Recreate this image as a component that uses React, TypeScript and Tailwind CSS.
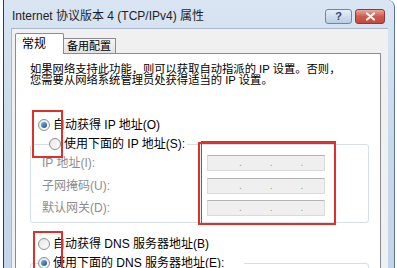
import React from "react";

const font = { fontFamily: '"Liberation Sans", "Noto Sans CJK SC", sans-serif' };

function Radio({ checked }: { checked?: boolean }) {
  return (
    <span className="relative flex size-[12px] shrink-0 items-center justify-center rounded-full border border-[#8e8f8f] bg-gradient-to-br from-[#e6e6e6] to-[#fdfdfd]">
      {checked ? (
        <span className="size-[6px] rounded-full bg-gradient-to-br from-[#7fb8e8] to-[#1c4f8c]" />
      ) : null}
    </span>
  );
}

function IpField() {
  return (
    <div className="flex h-[16px] w-[118px] items-center border border-[#dadada] border-t-[#b4b4b4] bg-[#efefef] text-[10px] leading-none text-[#9a9a9a]">
      <span className="w-[31px]" />
      <span>.</span>
      <span className="w-[28px]" />
      <span>.</span>
      <span className="w-[28px]" />
      <span>.</span>
    </div>
  );
}

export default function App() {
  const rows = ["IP 地址(I):", "子网掩码(U):", "默认网关(D):"];
  return (
    <div
      className="relative flex h-[268px] w-[397px] overflow-hidden bg-white text-[12px] text-black"
      style={font}
    >
      <div className="w-[4px] shrink-0 border-r border-[#3a3a3a] bg-white" />
      <div className="flex w-[391px] shrink-0 flex-col rounded-tr-[7px] border-r border-[#5d7391] bg-gradient-to-b from-[#d9e5f3] via-[#c9d9ec] to-[#c3d5ea]">
        <div className="flex h-[28px] shrink-0 items-center pl-[8px] pr-[9px] pt-[4px]">
          <span className="flex-1 whitespace-nowrap text-[12px] text-[#1e1e1e]">
            Internet 协议版本 4 (TCP/IPv4) 属性
          </span>
          <div className="flex gap-[3px]">
            <div className="flex h-[15px] w-[27px] items-center justify-center rounded-[3px] border border-[#6f87a6] bg-gradient-to-b from-[#e5eef8] to-[#b9cde4] text-[11px] font-bold leading-none text-[#30466a]">
              ?
            </div>
            <div className="flex h-[15px] w-[30px] items-center justify-center rounded-[3px] border border-[#8a3a3a] bg-gradient-to-b from-[#e9a99c] via-[#cf5a4c] to-[#c24a3e]">
              <svg width="11" height="9" viewBox="0 0 11 9">
                <path d="M2 1.5 L9 7.5 M9 1.5 L2 7.5" stroke="#fff" strokeWidth="2.2" strokeLinecap="round" />
              </svg>
            </div>
          </div>
        </div>
        <div className="ml-[7px] mr-[6px] flex flex-1 flex-col border-l border-t border-[#a9b8cb] bg-[#f0f0f0]">
          <div className="flex items-end pl-[3px] pt-[4px]">
            <div className="relative z-10 -mb-px flex h-[21px] w-[49px] items-center rounded-t-[2px] border border-b-0 border-[#898c95] bg-white pl-[6px]">
              常规
            </div>
            <div className="flex h-[15px] w-[52px] items-center whitespace-nowrap border border-b-0 border-l-0 border-[#898c95] bg-gradient-to-b from-[#f6f6f6] to-[#e2e2e2] pl-[3px] text-[11px]">
              备用配置
            </div>
          </div>
          <div className="ml-[3px] flex w-[366px] flex-1 flex-col border border-[#898c95] bg-white pl-[14px] pr-[11px] pt-[10px]">
            <div className="whitespace-nowrap text-[11.3px] leading-[11px]">
              <div>如果网络支持此功能，则可以获取自动指派的 IP 设置。否则，</div>
              <div>您需要从网络系统管理员处获得适当的 IP 设置。</div>
            </div>
            <div className="ml-[8px] mt-[31px] flex h-[16px] items-center gap-[3px]">
              <Radio checked />
              <span>自动获得 IP 地址(O)</span>
            </div>
            <fieldset className="mt-[3px] rounded-[3px] border border-[#d5dfe5] pb-[6px] pl-[11px]">
              <legend className="ml-[7px] flex h-[16px] items-center gap-[3px] pr-[2px]">
                <Radio />
                <span>使用下面的 IP 地址(S):</span>
              </legend>
              <div className="mt-[3px] flex flex-col gap-[6.5px]">
                {rows.map((r) => (
                  <div key={r} className="flex h-[16px] items-center">
                    <span className="w-[165px] text-[#8d8d8d]">{r}</span>
                    <IpField />
                  </div>
                ))}
              </div>
            </fieldset>
            <div className="ml-[8px] mt-[13px] flex h-[16px] items-center gap-[3px]">
              <Radio />
              <span>自动获得 DNS 服务器地址(B)</span>
            </div>
            <fieldset className="mt-[3px] rounded-[3px] border border-[#d5dfe5] pb-[40px]">
              <legend className="ml-[7px] flex h-[16px] items-center gap-[3px] pr-[20px]">
                <Radio checked />
                <span>使用下面的 DNS 服务器地址(E):</span>
              </legend>
            </fieldset>
          </div>
        </div>
      </div>

      <div className="pointer-events-none absolute left-[32px] top-[110px] h-[48px] w-[31px] border-2 border-[#e0302c]" />
      <div className="pointer-events-none absolute left-[198px] top-[142px] h-[83px] w-[138px] border-2 border-[#e0302c]" />
      <div className="pointer-events-none absolute left-[201px] top-[141px] h-[83px] w-[135px] border border-[#e0302c]" />
      <div className="pointer-events-none absolute left-[33px] top-[231px] h-[50px] w-[30px] border-2 border-[#e0302c]" />
    </div>
  );
}
